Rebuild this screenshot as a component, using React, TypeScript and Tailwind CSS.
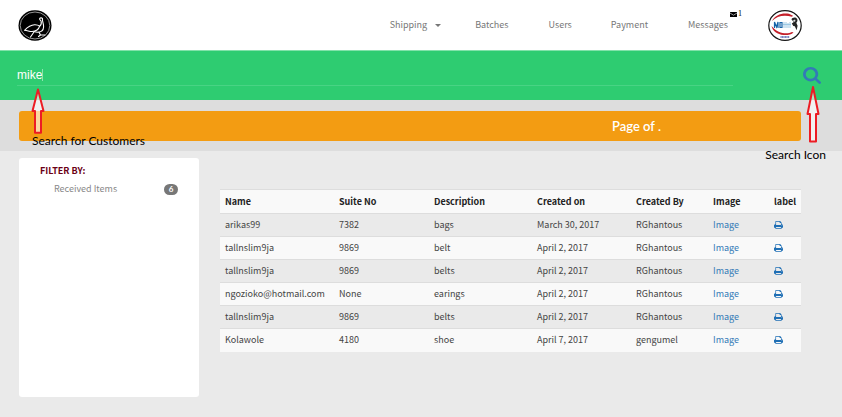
import { useState } from "react";

const ui = "font-['Noto_Sans_CJK_SC','Noto_Sans',sans-serif]";
const lato = "font-[Lato,'Open_Sans',sans-serif]";

const items = [
  { name: "arikas99", suite: "7382", description: "bags", date: "March 30, 2017", by: "RGhantous" },
  { name: "tallnslim9ja", suite: "9869", description: "belt", date: "April 2, 2017", by: "RGhantous" },
  { name: "tallnslim9ja", suite: "9869", description: "belts", date: "April 2, 2017", by: "RGhantous" },
  { name: "ngozioko@hotmail.com", suite: "None", description: "earings", date: "April 2, 2017", by: "RGhantous" },
  { name: "tallnslim9ja", suite: "9869", description: "belts", date: "April 2, 2017", by: "RGhantous" },
  { name: "Kolawole", suite: "4180", description: "shoe", date: "April 7, 2017", by: "gengumel" },
];

const columns = [
  { label: "Name", width: "w-[114px]" },
  { label: "Suite No", width: "w-[95px]" },
  { label: "Description", width: "w-[103px]" },
  { label: "Created on", width: "w-[99px]" },
  { label: "Created By", width: "w-[77px]" },
  { label: "Image", width: "w-[61px]" },
  { label: "label", width: "w-[32px]" },
];

function OstrichLogo() {
  return (
    <svg viewBox="0 0 34 31" className="h-[31px] w-[34px]" aria-hidden="true">
      <ellipse cx="17" cy="15.500" rx="16.500" ry="15.200" fill="#000" />
      <ellipse cx="17" cy="15.500" rx="14.800" ry="13.500" fill="none" stroke="#bbb" strokeWidth="0.800" />
      <g fill="none" stroke="#fff" strokeWidth="1.100" strokeLinecap="round" strokeLinejoin="round">
        <path d="M24.500 8.500c-.8-.9-2.700-.8-2.900.4-.1 1 1.300 1.200 1.600 2.600.4 2-.3 3.700-1.600 4.700" />
        <path d="M24.500 9c-.5 2 1.300 4.500 1.100 8-.2 3.200-2.700 5.200-6 5.200-1.300 0-2.500-.3-3.600-.7" />
        <path d="M6.500 20.300c3-3 6.500-5.300 10-5.500 2.500-.1 4.300.7 5.100 1.400-.8 3-4 5.200-7.600 5.300-2.600 0-4.500-1-7.500-1.200z" />
        <path d="M16 22l-3.500 5M21 22.200l1.500 2.800h4.500M22.500 25l-2 1.500" />
      </g>
    </svg>
  );
}

function CompanyBadge() {
  return (
    <svg viewBox="0 0 34 31" className="h-[31px] w-[34px]" aria-hidden="true">
      <ellipse cx="17" cy="15.500" rx="16.200" ry="14.800" fill="#fff" stroke="#151515" strokeWidth="1.200" />
      <path d="M4 11C7 5 14 2.500 21 3.800l4 2-1 1C16 4.500 9 6 4 11z" fill="#c4202a" />
      <path d="M3.500 16c1 5 6 8.500 12 9 4 .3 8-.5 10-2.500l-1.500-.4c-5 2.400-14 1.700-20.500-6.100z" fill="#c4202a" />
      <path d="M6.500 18v-6l2 5 1.500-5v6M12 12.500h2v5h-2z" fill="none" stroke="#1764a8" strokeWidth="1.200" />
      <path d="M16 12v6M18 12v6M20 13v5M22 12v6M15 14.500h8" fill="none" stroke="#9cc8e3" strokeWidth="1" />
      <path d="M23.500 9.500c.5-2 4.300-2.700 5.500-.7 1 1.400.3 3-.7 4l1.300 3-1 4.500-1.800-4-1.500-.2-1.500-2.500 2-1.600z" fill="#252525" />
      <path d="M25 10.500l2-1 .5 1.500-1.500 1z" fill="#ddd" />
      <path d="M12.500 27h9" stroke="#4c5ca8" strokeWidth="1.600" strokeDasharray="1.200 .3" />
    </svg>
  );
}

function PrintIcon() {
  return (
    <svg
      viewBox="64 128 1664 1536"
      preserveAspectRatio="none"
      className="h-2 w-[9px]"
      fill="currentColor"
      aria-hidden="true"
    >
      <path d="M448 1536h896v-256h-896v256zm0-640h896v-384h-160q-40 0-68-28t-28-68v-160h-640v640zm1152 64q0-26-19-45t-45-19-45 19-19 45 19 45 45 19 45-19 19-45zm128 0v416q0 13-9.500 22.500t-22.500 9.500h-224v160q0 40-28 68t-68 28h-960q-40 0-68-28t-28-68v-160h-224q-13 0-22.500-9.500t-9.500-22.500v-416q0-79 56.500-135.500t135.500-56.500h64v-544q0-40 28-68t68-28h672q40 0 88 20t76 48l152 152q28 28 48 76t20 88v256h64q79 0 135.500 56.500t56.500 135.500z" />
    </svg>
  );
}

function SearchIcon() {
  return (
    <svg viewBox="64 128 1664 1664" preserveAspectRatio="none" className="h-[17px] w-[18px]" fill="currentColor" aria-hidden="true">
      <path d="M1216 832q0-185-131.500-316.500t-316.500-131.500-316.500 131.500-131.500 316.500 131.500 316.500 316.500 131.500 316.500-131.500 131.500-316.500zm512 832q0 52-38 90t-90 38q-54 0-90-38l-343-342q-179 124-399 124-143 0-273.500-55.500t-225-150-150-225-55.500-273.500 55.500-273.500 150-225 225-150 273.500-55.500 273.500 55.500 225 150 150 225 55.500 273.500q0 220-124 399l343 343q37 37 37 90z" />
    </svg>
  );
}

function Arrow({ className }: { className: string }) {
  return (
    <svg viewBox="0 0 14 58" preserveAspectRatio="none" className={className} aria-hidden="true">
      <path
        d="M7 2 1.500 29H4v27.500h6V29h2.500z"
        fill="#fff"
        fillOpacity="0.600"
        stroke="#ed1c24"
        strokeWidth="2"
        strokeLinejoin="round"
        vectorEffect="non-scaling-stroke"
      />
    </svg>
  );
}

export default function App() {
  const [query, setQuery] = useState("mike");

  return (
    <div className={`relative min-h-screen bg-[#eaeaea] text-[9px] leading-4 text-[#444] ${ui}`}>
      <header className="flex h-[50px] items-center justify-between bg-white pr-10 pl-[18px]">
        <a href="#home" aria-label="Home">
          <OstrichLogo />
        </a>
        <nav className="flex items-center text-[#777]">
          <button type="button" className="flex items-center gap-2">
            Shipping
            <svg viewBox="0 0 6 3" className="h-[3px] w-[6px]" fill="currentColor" aria-hidden="true">
              <path d="M0 0h6L3 3z" />
            </svg>
          </button>
          <a href="#batches" className="ml-[34px]">Batches</a>
          <a href="#users" className="ml-10">Users</a>
          <a href="#payment" className="ml-[39px]">Payment</a>
          <a href="#messages" className="relative ml-10">
            Messages
            <span className="absolute -top-[11px] left-full ml-[2px] flex items-center gap-px font-['Liberation_Serif',serif] text-[8px] text-black">
              <svg viewBox="0 0 7 5" className="h-[5px] w-[7px]" aria-hidden="true">
                <path d="M0 0h7v5H0z" />
                <path d="M0 1l3.500 2.200L7 1" fill="none" stroke="#fff" strokeWidth="0.600" />
              </svg>
              1
            </span>
          </a>
          <a href="#account" aria-label="Account" className="ml-10">
            <CompanyBadge />
          </a>
        </nav>
      </header>

      <form
        className="flex h-[50px] items-center justify-between border-t border-[#82e2aa] bg-[#2ecc71] pr-[21px] pl-[17px]"
        onSubmit={(event) => event.preventDefault()}
      >
        <div className="mr-[70px] flex h-5 flex-1 items-center border-b border-[#48d384]">
          <input
            type="text"
            aria-label="Search for customers"
            value={query}
            onChange={(event) => setQuery(event.target.value)}
            className="field-sizing-content bg-transparent font-['Liberation_Sans',sans-serif] text-[12px] text-white outline-none"
          />
          <span className="h-3 w-px bg-[#8be3b0]" />
        </div>
        <button type="submit" aria-label="Search" className="text-[#337ab7]">
          <SearchIcon />
        </button>
      </form>

      <section className="bg-[#ddd] pt-[11px] pr-[41px] pb-[10px] pl-[19px]">
        <div className={`flex h-[30px] items-center justify-end rounded-[3px] bg-[#f39c12] pr-[140px] text-[13px] font-semibold text-white ${lato}`}>
          Page of .
        </div>
      </section>

      <main className="flex items-start gap-[21px] pt-[7px] pr-[41px] pb-5 pl-[19px]">
        <aside className="min-h-[239px] w-[180px] shrink-0 rounded-[3px] bg-white pt-[5px] pr-[21px] pl-[21px]">
          <h2 className="font-bold text-[#6b0015]">FILTER BY:</h2>
          <a href="#received" className="mt-[2px] flex items-center justify-between pl-[14px] text-[#888]">
            Received Items
            <span className={`flex h-[11px] w-[14px] items-center justify-center rounded-full bg-[#777] text-[8px] font-bold text-white ${lato}`}>
              6
            </span>
          </a>
        </aside>

        <table className="mt-[31px] w-full table-fixed border-collapse text-left">
          <colgroup>
            {columns.map((column) => (
              <col key={column.label} className={column.width} />
            ))}
          </colgroup>
          <thead>
            <tr className="h-6 border-t border-[#ddd] bg-[#f9f9f9] text-[#222]">
              {columns.map((column) => (
                <th key={column.label} className="pl-[5px] font-bold">{column.label}</th>
              ))}
            </tr>
          </thead>
          <tbody>
            {items.map((item, index) => (
              <tr key={index} className="h-[23px] border-t border-[#ddd] even:bg-[#f9f9f9]">
                <td className="pl-[5px]">{item.name}</td>
                <td className="pl-[5px]">{item.suite}</td>
                <td className="pl-[5px]">{item.description}</td>
                <td className="pl-[5px]">{item.date}</td>
                <td className="pl-[5px]">{item.by}</td>
                <td className="pl-[5px]">
                  <a href="#image" className="text-[#337ab7]">Image</a>
                </td>
                <td className="pl-[5px]">
                  <button type="button" aria-label="Print label" className="block text-[#1f6fb5]">
                    <PrintIcon />
                  </button>
                </td>
              </tr>
            ))}
          </tbody>
        </table>
      </main>

      <Arrow className="absolute top-[88px] left-[31px] h-[46px] w-[14px]" />
      <p className={`absolute top-[133px] left-[32px] text-[12px] text-black ${lato}`}>Search for Customers</p>
      <Arrow className="absolute top-[85px] right-[22px] h-[58px] w-[14px]" />
      <p className={`absolute top-[147px] right-[16px] text-[12px] text-black ${lato}`}>Search Icon</p>
    </div>
  );
}
